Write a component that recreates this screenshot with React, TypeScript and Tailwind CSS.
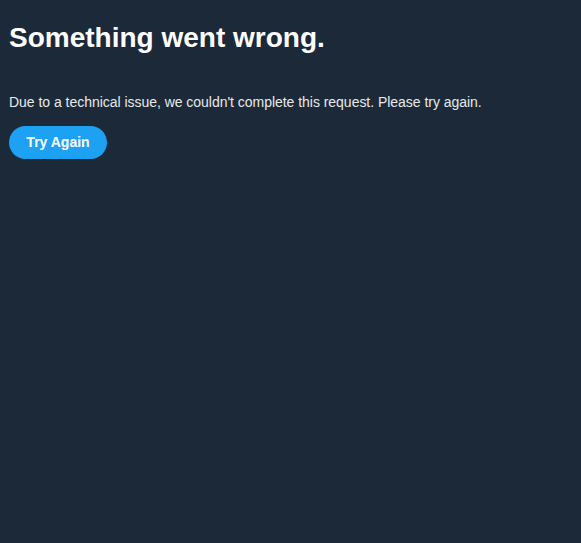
export default function App() {
  return (
    <div className="min-h-[543px] w-full bg-[#1c2938] text-white px-[9px] pt-[20px]" style={{ fontFamily: '"Liberation Sans", Arial, sans-serif' }}>
      <h1 className="text-[28px] font-bold leading-[36px] m-0">Something went wrong.</h1>
      <p className="text-[14px] leading-[18px] mt-[37px] text-[#e8eaeb] tracking-[-0.03px]">Due to a technical issue, we couldn't complete this request. Please try again.</p>
      <button className="mt-[15px] h-[33px] w-[98px] rounded-full bg-[#1da1f2] text-white text-[14px] font-bold">Try Again</button>
    </div>
  );
}
